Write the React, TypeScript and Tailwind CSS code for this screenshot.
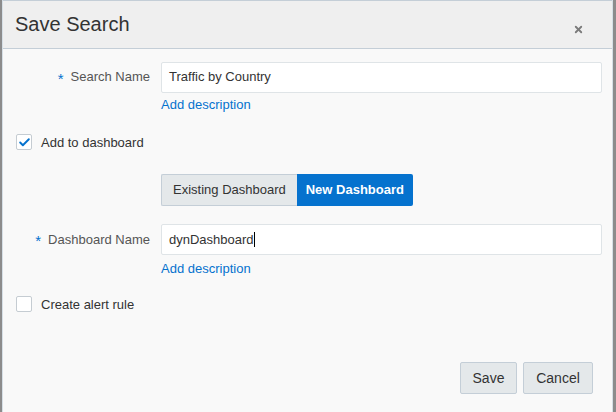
import { Check, X } from 'lucide-react'

const font = { fontFamily: '"Liberation Sans", Arial, sans-serif' }

function Label({ text }: { text: string }) {
  return (
    <div className="w-[158px] shrink-0 pr-[11px] flex justify-end items-center gap-[7px] text-[13px] text-[#555]">
      <span className="text-[#0572ce] text-[15px] leading-none mt-[2px]">*</span>
      <span>{text}</span>
    </div>
  )
}

export default function App() {
  return (
    <div className="w-[616px] h-[412px] bg-[#8c8c8c] flex" style={font}>
      <div className="ml-[2px] w-[611px] h-full border-x border-[#d6dfe6] bg-[#f9f9f9] flex flex-col">
        {/* header */}
        <div className="h-[49px] bg-[#efefef] border-y border-[#c4ced7] flex items-center justify-between pl-[12px] pr-[28px]">
          <h1 className="text-[20px] text-[#333] mt-[-2px]">Save Search</h1>
          <X className="w-[11px] h-[11px] text-[#7b7b7b] mt-[10px]" strokeWidth={4} />
        </div>

        {/* body */}
        <div className="flex-1 flex flex-col pt-[13px] pr-[10px]">
          <div className="flex items-center h-[30px]">
            <Label text="Search Name" />
            <div className="flex-1 h-[31px] bg-white border border-[#dfe4e7] rounded-[2px] flex items-center px-[7px] text-[13px] text-[#333]">
              Traffic by Country
            </div>
          </div>
          <div className="ml-[158px] mt-[3px] text-[13px] text-[#0572ce]">Add description</div>

          <label className="flex items-center gap-[9px] ml-[13px] mt-[18px] text-[13px] text-[#333]">
            <span className="w-[16px] h-[16px] bg-white border border-[#c5ccd2] rounded-[2px] flex items-center justify-center">
              <Check className="w-[13px] h-[13px] text-[#0572ce]" strokeWidth={3.5} />
            </span>
            Add to dashboard
          </label>

          <div className="ml-[158px] mt-[22px] flex h-[32px] text-[13px]">
            <div className="px-[11px] flex items-center bg-[#e4e8ea] border border-[#c4ced7] border-r-0 rounded-l-[2px] text-[#333]">
              Existing Dashboard
            </div>
            <div className="px-[9px] flex items-center bg-[#0572ce] text-white font-bold rounded-r-[2px]">
              New Dashboard
            </div>
          </div>

          <div className="flex items-center h-[31px] mt-[18px]">
            <Label text="Dashboard Name" />
            <div className="flex-1 h-[31px] bg-white border border-[#dfe4e7] rounded-[2px] flex items-center px-[7px] text-[13px] text-[#333]">
              dynDashboard<span className="w-px h-[15px] bg-black" />
            </div>
          </div>
          <div className="ml-[158px] mt-[4px] text-[13px] text-[#0572ce]">Add description</div>

          <label className="flex items-center gap-[9px] ml-[13px] mt-[16px] text-[13px] text-[#333]">
            <span className="w-[16px] h-[16px] bg-white border border-[#c5ccd2] rounded-[2px]" />
            Create alert rule
          </label>

          <div className="mt-auto mb-[18px] flex justify-end gap-[6px] pr-[9px]">
            <button className="h-[32px] w-[57px] bg-[#e4e8ea] border border-[#c4ced7] rounded-[2px] text-[14px] text-[#333]">
              Save
            </button>
            <button className="h-[32px] w-[70px] bg-[#e4e8ea] border border-[#c4ced7] rounded-[2px] text-[14px] text-[#333]">
              Cancel
            </button>
          </div>
        </div>
      </div>
    </div>
  )
}
